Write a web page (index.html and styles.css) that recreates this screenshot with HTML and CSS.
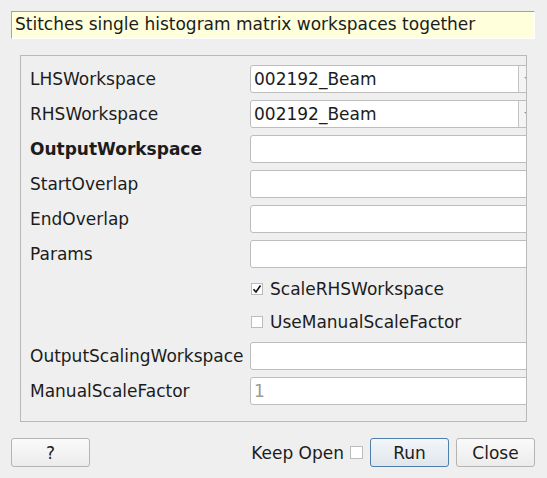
FILE: index.html
```html
<!DOCTYPE html>
<html>
<head>
<meta charset="utf-8">
<link rel="stylesheet" href="styles.css">
</head>
<body>
<div class="dialog">
  <div class="desc">Stitches single histogram matrix workspaces together</div>
  <div class="group">
    <div class="form">
      <div class="row"><span class="label">LHSWorkspace</span><div class="combo"><span class="val">002192_Beam</span><span class="drop"><span class="arrow"></span></span></div></div>
      <div class="row"><span class="label">RHSWorkspace</span><div class="combo"><span class="val">002192_Beam</span><span class="drop"><span class="arrow"></span></span></div></div>
      <div class="row"><span class="label bold">OutputWorkspace</span><div class="input"></div></div>
      <div class="row"><span class="label">StartOverlap</span><div class="input"></div></div>
      <div class="row"><span class="label">EndOverlap</span><div class="input"></div></div>
      <div class="row"><span class="label">Params</span><div class="input"></div></div>
      <div class="row check-row first"><span class="label"></span><label class="check"><span class="box checked"><svg width="10" height="10" viewBox="0 0 10 10"><path d="M1.5 5.2 L4 8 L8.5 1.5" fill="none" stroke="#111" stroke-width="1.6"/></svg></span>ScaleRHSWorkspace</label></div>
      <div class="row check-row"><span class="label"></span><label class="check"><span class="box"></span>UseManualScaleFactor</label></div>
      <div class="row"><span class="label">OutputScalingWorkspace</span><div class="input"></div></div>
      <div class="row"><span class="label">ManualScaleFactor</span><div class="input disabled">1</div></div>
    </div>
  </div>
  <div class="buttons">
    <button class="btn help">?</button>
    <div class="spacer"></div>
    <span class="keep">Keep Open</span><span class="box keepbox"></span>
    <button class="btn run">Run</button>
    <button class="btn close">Close</button>
  </div>
</div>
</body>
</html>
```
FILE: styles.css
```css
html, body {
  margin: 0;
  padding: 0;
  background: #efefef;
}
body {
  font-family: "DejaVu Sans", sans-serif;
  font-size: 17px;
  color: #1c1c1c;
  width: 547px;
  height: 478px;
  overflow: hidden;
}
.dialog {
  padding: 11px 12px 0 11px;
  display: flex;
  flex-direction: column;
}
.desc {
  height: 28px;
  box-sizing: border-box;
  background: #ffffdc;
  border-top: 1px solid #a0a0a0;
  border-left: 1px solid #a8a8a8;
  border-right: 1px solid #fff;
  border-bottom: 1px solid #fff;
  padding: 0 0 0 3px;
  line-height: 25px;
  white-space: nowrap;
}
.group {
  margin: 16px 0 0 9px;
  width: 507px;
  height: 367px;
  box-sizing: border-box;
  border: 1px solid #b9b9b9;
  overflow: hidden;
}
.form {
  padding: 9px 0 0 9px;
  display: flex;
  flex-direction: column;
  gap: 7px;
}
.row {
  display: flex;
  align-items: center;
  height: 28px;
  line-height: 26px;
}
.check-row {
  height: 26px;
}
.check-row.first {
  height: 27px;
}
.label {
  width: 220px;
  flex: none;
  white-space: nowrap;
}
.bold {
  font-weight: bold;
}
.input, .combo {
  flex: none;
  width: 290px;
  height: 28px;
  box-sizing: border-box;
  background: #fff;
  border: 1px solid #bdbdbd;
  border-radius: 3px;
  padding: 0 3px;
  line-height: 26px;
}
.input.disabled {
  color: #9a9a9a;
}
.combo {
  display: flex;
  padding: 0;
}
.combo .val {
  flex: 1;
  padding-left: 3px;
}
.combo .drop {
  width: 20px;
  flex: none;
  border-left: 1px solid #c4c4c4;
  background: #f4f4f4;
  position: relative;
}
.arrow {
  position: absolute;
  left: 5px;
  top: 11px;
  width: 0;
  height: 0;
  border-left: 3px solid transparent;
  border-right: 3px solid transparent;
  border-top: 3px solid #9a9a9a;
}
.check {
  display: flex;
  align-items: center;
  gap: 7px;
  margin-left: 1px;
}
.box {
  width: 12px;
  height: 12px;
  box-sizing: border-box;
  border: 1px solid #bcbcbc;
  background: #fff;
  display: inline-flex;
  align-items: center;
  justify-content: center;
}
.buttons {
  margin-top: 16px;
  display: flex;
  align-items: center;
  height: 29px;
}
.spacer {
  flex: 1;
}
.btn {
  font-family: "DejaVu Sans", sans-serif;
  font-size: 17px;
  color: #1c1c1c;
  height: 29px;
  width: 79px;
  box-sizing: border-box;
  border: 1px solid #b4b4b4;
  border-radius: 3px;
  background: linear-gradient(#fafafa, #ececec);
  padding: 0;
}
.keep {
  margin-right: 6px;
}
.keepbox {
  width: 13px;
  height: 13px;
  margin-right: 7px;
}
.run {
  border-color: #4f7ea8;
  background: linear-gradient(#f3f6f9, #dfe6ec);
  margin-right: 7px;
}
```
